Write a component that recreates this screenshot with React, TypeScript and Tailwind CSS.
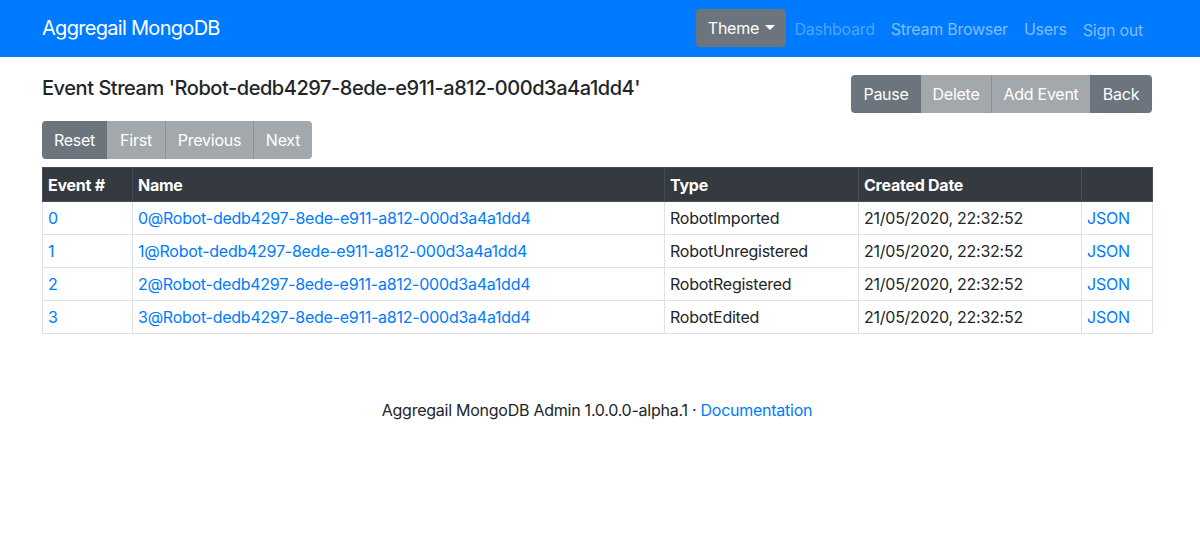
import React from "react";

const font = { fontFamily: "Inter, 'Liberation Sans', sans-serif" };

const events = [
  { n: 0, type: "RobotImported" },
  { n: 1, type: "RobotUnregistered" },
  { n: 2, type: "RobotRegistered" },
  { n: 3, type: "RobotEdited" },
];

const streamId = "Robot-dedb4297-8ede-e911-a812-000d3a4a1dd4";

function Btn({
  children,
  disabled,
  className = "",
}: {
  children: React.ReactNode;
  disabled?: boolean;
  className?: string;
}) {
  return (
    <button
      className={`h-[38px] px-2 whitespace-nowrap text-base text-white ${
        disabled ? "bg-[#a3a8ad]" : "bg-[#6c757d]"
      } ${className}`}
    >
      {children}
    </button>
  );
}

export default function App() {
  return (
    <div className="min-h-[550px] bg-white text-[#212529] tracking-[-0.25px]" style={font}>
      {/* Navbar */}
      <nav className="h-[57px] bg-[#007bff] flex items-center">
        <div className="ml-[42px] w-[1110px] flex items-center justify-between">
          <a className="text-[20px] text-white tracking-[-0.7px] -mt-[1px]">Aggregail MongoDB</a>
          <div className="flex items-center text-base">
            <button className="h-[38px] w-[90px] rounded bg-[#6c757d] text-white flex items-center justify-center gap-1.5 -mt-[2px]">
              Theme
              <span className="w-0 h-0 border-l-[5px] border-r-[5px] border-t-[5px] border-l-transparent border-r-transparent border-t-white"></span>
            </button>
            <a className="ml-2 text-[#4fa3ff]">Dashboard</a>
            <a className="ml-4 text-[#80bdff]">Stream Browser</a>
            <a className="ml-4 text-[#80bdff]">Users</a>
            <a className="ml-4 mr-[9px] mt-[2px] text-[#80bdff]">Sign out</a>
          </div>
        </div>
      </nav>

      <div className="ml-[42px] w-[1110px] pt-[18px]">
        {/* Header row */}
        <div className="flex items-start justify-between">
          <h5 className="text-[20px] leading-[24px] font-medium tracking-[-0.45px] mt-[1px]">
            Event Stream '{streamId}'
          </h5>
          <div className="flex rounded overflow-hidden">
            <Btn className="w-[70px]">Pause</Btn>
            <Btn disabled className="w-[70px]">Delete</Btn>
            <Btn disabled className="w-[99px] border-l border-[#8c9196]">Add Event</Btn>
            <Btn className="w-[62px]">Back</Btn>
          </div>
        </div>

        {/* Pagination */}
        <div className="mt-[8px] flex">
          <div className="flex rounded overflow-hidden">
            <Btn className="w-[65px]">Reset</Btn>
            <Btn disabled className="w-[58px]">First</Btn>
            <Btn disabled className="w-[88px] border-l border-[#8c9196]">Previous</Btn>
            <Btn disabled className="w-[59px] border-l border-[#8c9196]">Next</Btn>
          </div>
        </div>

        {/* Table */}
        <table className="mt-[8px] w-full table-fixed border-collapse text-base">
          <colgroup>
            <col className="w-[90px]" />
            <col className="w-[532px]" />
            <col className="w-[194px]" />
            <col className="w-[223px]" />
            <col className="w-[71px]" />
          </colgroup>
          <thead>
            <tr className="bg-[#343a40] text-white h-[34px]">
              <th className="text-left font-bold px-[5px] border border-[#454d55]">Event #</th>
              <th className="text-left font-bold px-[5px] border border-[#454d55]">Name</th>
              <th className="text-left font-bold px-[5px] border border-[#454d55]">Type</th>
              <th className="text-left font-bold px-[5px] border border-[#454d55]">Created Date</th>
              <th className="border border-[#454d55]"></th>
            </tr>
          </thead>
          <tbody>
            {events.map((e) => (
              <tr key={e.n} className="h-[33px]">
                <td className="px-[5px] border border-[#dee2e6] text-[#007bff]">{e.n}</td>
                <td className="px-[5px] border border-[#dee2e6] text-[#007bff]">
                  {e.n}@{streamId}
                </td>
                <td className="px-[5px] border border-[#dee2e6]">{e.type}</td>
                <td className="px-[5px] border border-[#dee2e6]">21/05/2020, 22:32:52</td>
                <td className="px-[5px] border border-[#dee2e6] text-[#007bff]">JSON</td>
              </tr>
            ))}
          </tbody>
        </table>

        {/* Footer */}
        <p className="mt-[64px] text-center text-base">
          Aggregail MongoDB Admin 1.0.0.0-alpha.1 ·{" "}
          <a className="text-[#007bff]">Documentation</a>
        </p>
      </div>
    </div>
  );
}
